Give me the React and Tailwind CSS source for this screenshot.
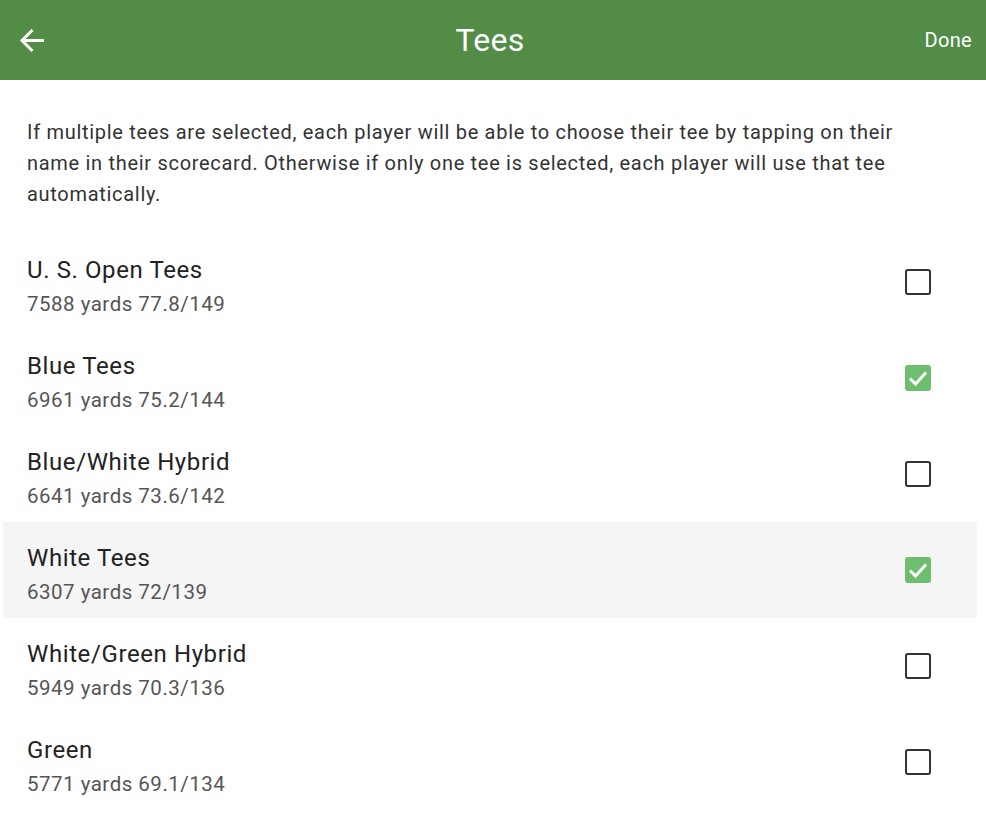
import React, { useState } from "react";

const tees = [
  { id: 1, name: "U. S. Open Tees", info: "7588 yards 77.8/149", checked: false },
  { id: 2, name: "Blue Tees", info: "6961 yards 75.2/144", checked: true },
  { id: 3, name: "Blue/White Hybrid", info: "6641 yards 73.6/142", checked: false },
  { id: 4, name: "White Tees", info: "6307 yards 72/139", checked: true },
  { id: 5, name: "White/Green Hybrid", info: "5949 yards 70.3/136", checked: false },
  { id: 6, name: "Green", info: "5771 yards 69.1/134", checked: false },
];

const Checkbox = ({ checked }) =>
  checked ? (
    <div className="w-[26px] h-[26px] rounded-[3px] bg-[#6fbd6f] flex items-center justify-center">
      <svg width="26" height="26" viewBox="0 0 26 26" fill="none" stroke="white" strokeWidth="3">
        <path d="M5 13.5l5.5 5.5L21 7.5" />
      </svg>
    </div>
  ) : (
    <div className="w-[26px] h-[26px] rounded-[3px] border-[2.5px] border-[#333]" />
  );

const App = () => {
  const [data, setData] = useState(tees);

  const toggle = (id) => {
    setData((prev) => prev.map((t) => (t.id === id ? { ...t, checked: !t.checked } : t)));
  };

  return (
    <div className="w-[986px] h-[836px] bg-white overflow-hidden" style={{ fontFamily: "Roboto, sans-serif" }}>
      {/* app bar */}
      <div className="h-[80px] bg-[#528c47] flex items-center relative text-white">
        <svg className="ml-[19px]" width="27" height="27" viewBox="0 0 27 27" fill="none" stroke="white" strokeWidth="3">
          <path d="M25 13.5H3.5M13.5 3L3 13.5 13.5 24" />
        </svg>
        <div className="absolute left-0 right-0 top-0 h-[80px] flex items-center justify-center pointer-events-none">
          <span className="text-[32px] tracking-[0.3px] mr-[6px]">Tees</span>
        </div>
        <span className="ml-auto mr-[14px] text-[20px] tracking-[0.3px]">Done</span>
      </div>

      <p className="mt-[37px] ml-[27px] mr-[40px] text-[20px] leading-[31px] tracking-[0.7px] text-[#333]">
        If multiple tees are selected, each player will be able to choose their tee by tapping on their name in their
        scorecard. Otherwise if only one tee is selected, each player will use that tee automatically.
      </p>

      <div className="mt-[24px]">
        {data.map((t) => (
          <div
            key={t.id}
            onClick={() => toggle(t.id)}
            className={
              "h-[96px] flex items-start ml-[3px] mr-[9px] pl-[24px] pr-[46px] " +
              (t.id === 4 ? "bg-[#f5f5f5]" : "")
            }
          >
            <div className="pt-[21px] flex-1">
              <div className="text-[24px] leading-[30px] tracking-[0.6px] text-[#222]">{t.name}</div>
              <div className="mt-[6px] text-[20.5px] leading-[26px] tracking-[0.5px] text-[#555]">{t.info}</div>
            </div>
            <div className="h-[96px] flex items-center">
              <Checkbox checked={t.checked} />
            </div>
          </div>
        ))}
      </div>
    </div>
  );
};

export default App;
